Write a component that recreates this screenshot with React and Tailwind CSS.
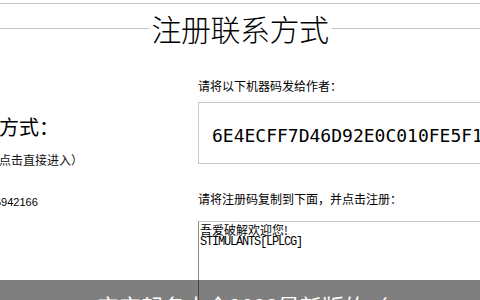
const cjk = "font-['Noto_Sans_CJK_SC',sans-serif]";

const LeftColumn = () => (
  <div className={`w-[198px] shrink-0 overflow-hidden text-black ${cjk}`}>
    <div className="mt-[65px] -ml-[41px] whitespace-nowrap text-[20px] leading-none">联系方式：</div>
    <div className="mt-[17px] -ml-[13px] whitespace-nowrap text-[12px] leading-[12px] text-[#111]">（点击直接进入）</div>
    <div className="mt-[30px] -ml-[5px] whitespace-nowrap font-['Liberation_Sans',sans-serif] text-[11px] leading-[12px]">
      5942166
    </div>
  </div>
);

const RightColumn = () => (
  <div className={`min-w-0 flex-1 text-black ${cjk}`}>
    <p className="mt-[26px] whitespace-nowrap text-[12px] leading-4">请将以下机器码发给作者：</p>
    <div className="mt-[8px] h-[62px] w-[320px] border border-[#c8c8c8] pl-[13px] pt-[20px]">
      <span className="whitespace-nowrap font-['DejaVu_Sans_Mono',monospace] text-[18px] leading-[22px]">
        6E4ECFF7D46D92E0C010FE5F1A2B
      </span>
    </div>
    <p className="mt-[27px] whitespace-nowrap text-[12px] leading-4">请将注册码复制到下面，并点击注册：</p>
    <div className="mt-[14px] h-[120px] w-[320px] border-l border-t border-l-[#8a8a8a] border-t-[#c8c8c8] pl-[1px] pt-[1px] text-[12px]">
      <div className="whitespace-nowrap leading-[13px]">吾爱破解欢迎您!</div>
      <div className="whitespace-nowrap font-['Liberation_Mono',monospace] leading-[13px] tracking-[-1.2px]">STIMULANTS[LPLCG]</div>
    </div>
  </div>
);

export default function App() {
  return (
    <div className="relative h-[300px] w-[480px] overflow-hidden bg-white">
      <div className="mt-[3px] border-t border-[#c4c4c4]" />
      <div className="flex h-[48px] items-center">
        <div className="h-px flex-1 bg-[#c4c4c4]" />
        <h1 className={`px-[3px] text-[30px] font-light leading-[36px] tracking-[-0.5px] text-black ${cjk}`}>
          注册联系方式
        </h1>
        <div className="h-px flex-1 bg-[#c4c4c4]" />
      </div>
      <div className="flex">
        <LeftColumn />
        <RightColumn />
      </div>
      {/* caption strip over the page */}
      <div className="absolute left-0 right-0 top-[280px] h-[40px] bg-black/50 pl-[97px] pt-[14px]">
        <span className={`whitespace-nowrap text-[22px] leading-none text-white ${cjk}`}>宝宝起名大全2023最新版的（</span>
      </div>
    </div>
  );
}
